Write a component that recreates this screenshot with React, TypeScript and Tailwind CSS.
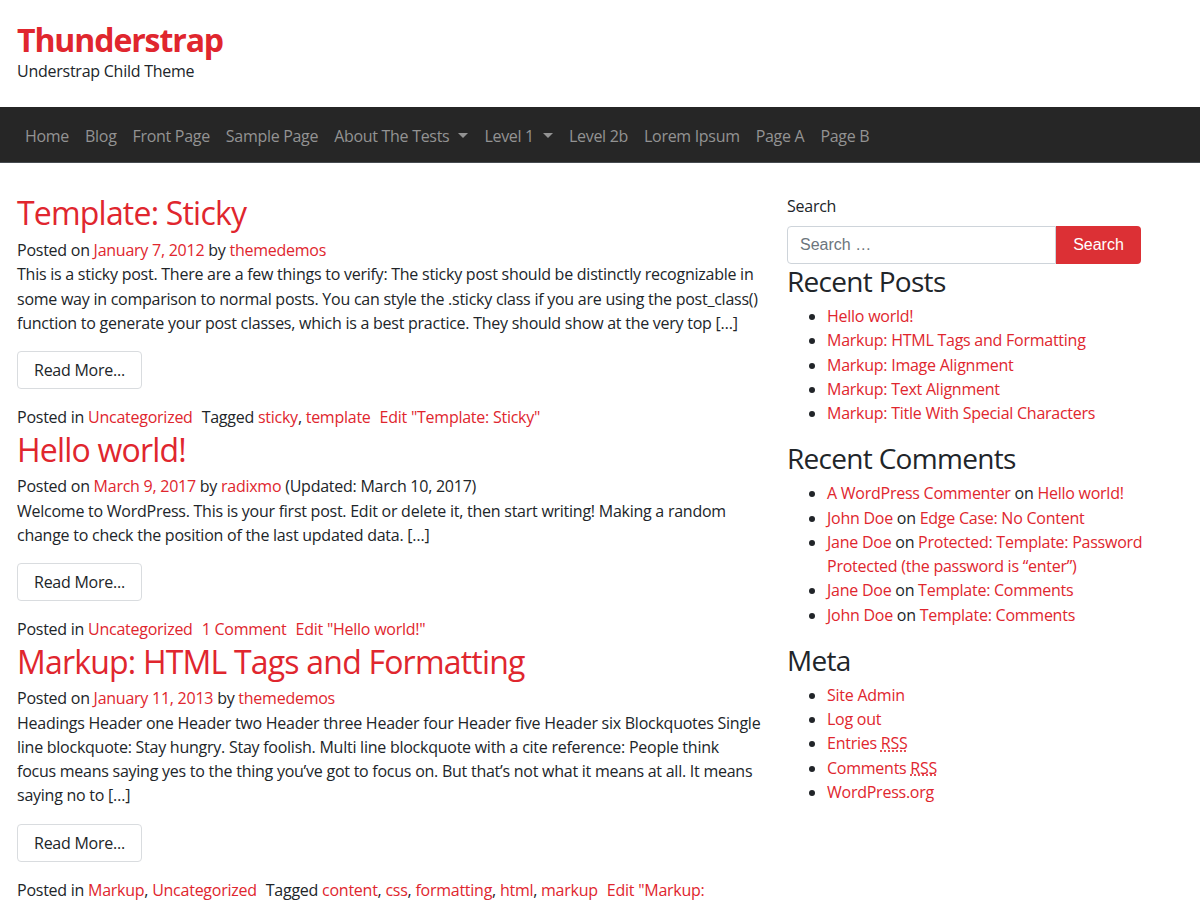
import React from "react";

const RED = "text-[#e0262e]";

function A({ children, className = "" }: { children: React.ReactNode; className?: string }) {
  return <a className={`text-[#e0262e] ${className}`}>{children}</a>;
}

function Caret() {
  return (
    <span className="ml-[9px] inline-block h-0 w-0 border-x-[5px] border-t-[5px] border-x-transparent border-t-[#939393] align-middle" />
  );
}

function ReadMore() {
  return (
    <p className="mb-4">
      <span className="inline-block rounded-[4px] border border-[#d9dcdf] bg-white px-4 py-[6px] leading-6 text-[#212529]">
        Read More...
      </span>
    </p>
  );
}

function H2({ children }: { children: React.ReactNode }) {
  return <h2 className={`${RED} mb-[6px] text-[32px] leading-[38px] tracking-[-0.8px]`}>{children}</h2>;
}

function Lines({ lines }: { lines: string[] }) {
  return (
    <p>
      {lines.map((l, i) => (
        <span key={i} className="block whitespace-nowrap">
          {l}
        </span>
      ))}
    </p>
  );
}

export default function App() {
  const nav: { label: string; caret?: boolean }[] = [
    { label: "Home" },
    { label: "Blog" },
    { label: "Front Page" },
    { label: "Sample Page" },
    { label: "About The Tests", caret: true },
    { label: "Level 1", caret: true },
    { label: "Level 2b" },
    { label: "Lorem Ipsum" },
    { label: "Page A" },
    { label: "Page B" },
  ];
  return (
    <div
      className="min-h-[900px] bg-white text-[16px] leading-[24.25px] tracking-[-0.25px] text-[#212529]"
      style={{ fontFamily: '"Open Sans", "Noto Sans", sans-serif' }}
    >
      {/* Header */}
      <header className="px-[17px] pt-[21px] pb-[24px]">
        <div className="text-[32px] font-bold leading-[38px] tracking-[-1.1px] text-[#e0262e]">Thunderstrap</div>
        <div className="leading-6">Understrap Child Theme</div>
      </header>

      {/* Navbar */}
      <nav className="flex h-[56px] items-center border-b border-[#464b50] bg-[#262626] px-[17px] pt-[2px] tracking-[-0.3px]">
        {nav.map((n) => (
          <span key={n.label} className="flex items-center px-2 leading-6 text-[#939393]">
            {n.label}
            {n.caret && <Caret />}
          </span>
        ))}
      </nav>

      {/* Content */}
      <div className="flex gap-[30px] px-[17px] pt-[31px]">
        <main className="w-[740px] shrink-0">
          <article>
            <H2>Template: Sticky</H2>
            <div>
              Posted on <A>January 7, 2012</A> by <A>themedemos</A>
            </div>
            <Lines
              lines={[
                "This is a sticky post. There are a few things to verify: The sticky post should be distinctly recognizable in",
                "some way in comparison to normal posts. You can style the .sticky class if you are using the post_class()",
                "function to generate your post classes, which is a best practice. They should show at the very top […]",
              ]}
            />
            <div className="mt-4">
              <ReadMore />
            </div>
            <footer className="mb-[2px]">
              Posted in <A>Uncategorized</A>
              <span className="pl-[9px]">
                Tagged <A>sticky</A>, <A>template</A>
              </span>
              <A className="pl-[9px]">Edit "Template: Sticky"</A>
            </footer>
          </article>

          <article>
            <H2>Hello world!</H2>
            <div className="-mt-px">
              Posted on <A>March 9, 2017</A> by <A>radixmo</A> (Updated: March 10, 2017)
            </div>
            <Lines
              lines={[
                "Welcome to WordPress. This is your first post. Edit or delete it, then start writing! Making a random",
                "change to check the position of the last updated data. […]",
              ]}
            />
            <div className="mt-4">
              <ReadMore />
            </div>
            <footer className="mb-[2px]">
              Posted in <A>Uncategorized</A>
              <A className="pl-[9px]">1 Comment</A>
              <A className="pl-[9px]">Edit "Hello world!"</A>
            </footer>
          </article>

          <article>
            <H2>Markup: HTML Tags and Formatting</H2>
            <div className="-mt-px">
              Posted on <A>January 11, 2013</A> by <A>themedemos</A>
            </div>
            <Lines
              lines={[
                "Headings Header one Header two Header three Header four Header five Header six Blockquotes Single",
                "line blockquote: Stay hungry. Stay foolish. Multi line blockquote with a cite reference: People think",
                "focus means saying yes to the thing you’ve got to focus on. But that’s not what it means at all. It means",
                "saying no to […]",
              ]}
            />
            <div className="mt-4">
              <ReadMore />
            </div>
            <footer>
              Posted in <A>Markup</A>, <A>Uncategorized</A>
              <span className="pl-[9px]">
                Tagged <A>content</A>, <A>css</A>, <A>formatting</A>, <A>html</A>, <A>markup</A>
              </span>
              <A className="pl-[9px]">
                Edit "Markup:
                <br />
                HTML Tags and Formatting"
              </A>
            </footer>
          </article>
        </main>

        <aside className="w-[354px] shrink-0">
          <label className="mb-2 block leading-6">Search</label>
          <div className="flex h-[38px]" style={{ fontFamily: '"Liberation Sans", Arial, sans-serif', letterSpacing: 0 }}>
            <div className="flex flex-1 items-center rounded-l-[4px] border border-[#ced4da] px-3 text-[#6c757d]">
              Search …
            </div>
            <div className="flex w-[85px] items-center justify-center rounded-r-[4px] bg-[#dc3035] text-white">
              Search
            </div>
          </div>

          <h3 className="mb-[6px] text-[28px] leading-[34px] tracking-[-0.7px]">Recent Posts</h3>
          <ul className="mb-4 list-disc pl-10">
            <li><A>Hello world!</A></li>
            <li><A>Markup: HTML Tags and Formatting</A></li>
            <li><A>Markup: Image Alignment</A></li>
            <li><A>Markup: Text Alignment</A></li>
            <li><A>Markup: Title With Special Characters</A></li>
          </ul>

          <h3 className="mb-[6px] text-[28px] leading-[34px] tracking-[-0.7px]">Recent Comments</h3>
          <ul className="mb-4 list-disc pl-10">
            <li><A>A WordPress Commenter</A> on <A>Hello world!</A></li>
            <li><A>John Doe</A> on <A>Edge Case: No Content</A></li>
            <li className="whitespace-nowrap">
              <A>Jane Doe</A> on <A>Protected: Template: Password</A>
              <br />
              <A>Protected (the password is “enter”)</A>
            </li>
            <li><A>Jane Doe</A> on <A>Template: Comments</A></li>
            <li><A>John Doe</A> on <A>Template: Comments</A></li>
          </ul>

          <h3 className="mb-[6px] text-[28px] leading-[34px] tracking-[-0.7px]">Meta</h3>
          <ul className="mb-4 list-disc pl-10">
            <li><A>Site Admin</A></li>
            <li><A>Log out</A></li>
            <li><A>Entries <abbr className="underline decoration-dotted">RSS</abbr></A></li>
            <li><A>Comments <abbr className="underline decoration-dotted">RSS</abbr></A></li>
            <li><A>WordPress.org</A></li>
          </ul>
        </aside>
      </div>
    </div>
  );
}
